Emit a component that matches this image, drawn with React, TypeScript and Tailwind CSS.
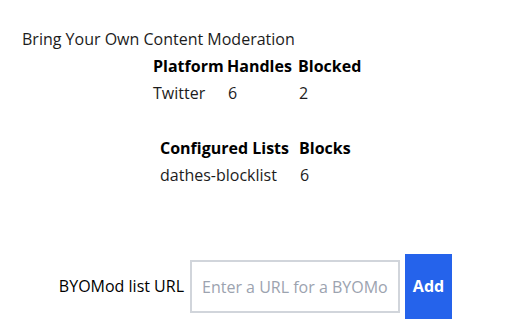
export default function App() {
  return (
    <div
      className="w-[512px] h-[320px] overflow-hidden bg-white text-[16px] leading-[27px] text-[#1c1c1c]"
      style={{ fontFamily: '"Open Sans", sans-serif' }}
    >
      <div className="pt-[26px] pl-[22px]">Bring Your Own Content Moderation</div>
      <div className="flex flex-col items-center pl-[3px]">
        <table className="border-collapse">
          <thead>
            <tr className="h-[27px] font-bold text-black">
              <th className="w-[74px] pl-[2px] text-left font-bold">Platform</th>
              <th className="w-[71px] pl-[2px] text-left font-bold">Handles</th>
              <th className="w-[68px] pl-[2px] text-left font-bold">Blocked</th>
            </tr>
          </thead>
          <tbody>
            <tr className="h-[27px]">
              <td className="pl-[2px]">Twitter</td>
              <td className="pl-[3px]">6</td>
              <td className="pl-[3px]">2</td>
            </tr>
          </tbody>
        </table>
        <table className="mt-[28px] border-collapse">
          <thead>
            <tr className="h-[27px] text-black">
              <th className="w-[139px] pl-[2px] text-left font-bold">Configured Lists</th>
              <th className="w-[60px] pl-[2px] text-left font-bold">Blocks</th>
            </tr>
          </thead>
          <tbody>
            <tr className="h-[27px]">
              <td className="pl-[2px]">dathes-blocklist</td>
              <td className="pl-[3px]">6</td>
            </tr>
          </tbody>
        </table>
      </div>
      <div className="mt-[65px] flex items-center justify-center">
        <div className="flex w-[124px] justify-end">
          <label className="shrink-0 whitespace-nowrap text-black">BYOMod list URL</label>
        </div>
        <input
          type="text"
          placeholder="Enter a URL for a BYOMod list"
          className="ml-[6px] h-[53px] w-[210px] border-2 border-[#d1d5db] px-[10px] text-[16px] text-black outline-none placeholder:text-[#9ca3af]"
          style={{ fontFamily: '"Open Sans", sans-serif' }}
        />
        <button className="ml-[5px] h-[65px] w-[47px] bg-[#2563eb] font-bold text-white">
          Add
        </button>
      </div>
    </div>
  );
}
